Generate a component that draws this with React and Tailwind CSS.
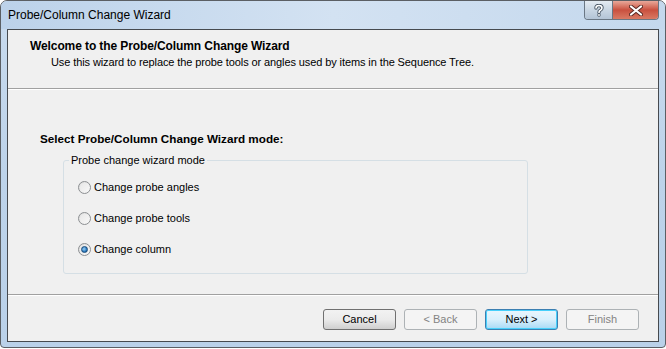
import React from 'react'

const font = { fontFamily: '"Liberation Sans", Arial, sans-serif' }

function Radio({ checked }) {
  return (
    <span className="relative inline-flex h-[13px] w-[13px] shrink-0 items-center justify-center rounded-full border border-[#8c8f92] bg-gradient-to-br from-[#dcdcdc] to-[#fbfbfb]">
      <span className="h-[9px] w-[9px] rounded-full bg-gradient-to-br from-[#e8e8e8] to-[#f7f7f7]" />
      {checked && (
        <span className="absolute h-[7px] w-[7px] rounded-full border border-[#1a4b7a] bg-[radial-gradient(circle_at_40%_40%,#9fd2f6,#2a7bc0_60%,#174a7c)]" />
      )}
    </span>
  )
}

function Btn({ children, disabled, primary }) {
  let cls = 'border-[#707070] bg-gradient-to-b from-[#f2f2f2] via-[#ebebeb] to-[#cfcfcf] text-black'
  if (disabled) cls = 'border-[#adb2b5] bg-[#f4f4f4] text-[#838383]'
  if (primary) cls = 'border-[#3c7fb1] bg-gradient-to-b from-[#eaf6fd] via-[#d9f0fc] to-[#a7d9f5] text-black shadow-[inset_0_0_0_1px_#48d0fb]'
  return (
    <div className={'flex h-[21px] w-[73px] items-center justify-center rounded-[3px] border text-[11px] ' + cls}>
      {children}
    </div>
  )
}

export default function App() {
  return (
    <div className="h-[349px] w-[666px] bg-white" style={font}>
      <div className="flex h-[348px] w-[666px] flex-col rounded-t-[7px] rounded-b-[4px] border border-[#5b5f64] bg-gradient-to-b from-[#c9dbee] via-[#bdd3ea] to-[#bad1e9]">
        {/* title bar */}
        <div className="flex h-[28px] items-start rounded-t-[6px] bg-gradient-to-r from-[#bcd2ea] via-[#d3e2f2] to-[#c4d8ed] pr-[6px]">
          <div className="flex h-[27px] flex-1 items-center pl-[7px] text-[12px] text-black">Probe/Column Change Wizard</div>
          <div className="flex h-[19px] overflow-hidden rounded-b-[4px] border border-t-0 border-[#6a7784]">
            <div className="flex w-[28px] items-center justify-center border-r border-[#6a7784] bg-gradient-to-b from-[#e4ebf2] via-[#c9d6e3] to-[#b3c4d6]">
              <svg width="10" height="13" viewBox="0 0 10 13">
                <path d="M2 4 Q2 1.5 5 1.5 Q8 1.5 8 4 Q8 5.5 6 6.5 Q5 7 5 8.5" fill="none" stroke="#4a5866" strokeWidth="3.4" strokeLinecap="round" />
                <path d="M2 4 Q2 1.5 5 1.5 Q8 1.5 8 4 Q8 5.5 6 6.5 Q5 7 5 8.5" fill="none" stroke="#fff" strokeWidth="1.6" strokeLinecap="round" />
                <circle cx="5" cy="11" r="1.7" fill="#4a5866" />
                <circle cx="5" cy="11" r="0.9" fill="#fff" />
              </svg>
            </div>
            <div className="flex w-[45px] items-center justify-center bg-gradient-to-b from-[#e8a89a] via-[#c9503f] to-[#d97a64]">
              <svg width="14" height="11" viewBox="0 0 14 11">
                <path d="M2 1.5 L12 9.5 M12 1.5 L2 9.5" stroke="#5a2a24" strokeWidth="4" strokeLinecap="round" />
                <path d="M2 1.5 L12 9.5 M12 1.5 L2 9.5" stroke="#fff" strokeWidth="2.2" strokeLinecap="round" />
              </svg>
            </div>
          </div>
        </div>

        {/* client area */}
        <div className="mx-[6px] flex h-[313px] flex-col border border-[#464a4f] bg-[#f0f0f0] text-[11px] text-black">
          <div className="h-[58px] pt-[9px]">
            <div className="pl-[22px] text-[12px] font-bold leading-[15px] tracking-[-0.1px]">Welcome to the Probe/Column Change Wizard</div>
            <div className="mt-[1px] pl-[43px] leading-[14px] tracking-[-0.1px]">Use this wizard to replace the probe tools or angles used by items in the Sequence Tree.</div>
          </div>
          <div className="h-[2px] border-t border-[#a0a0a0] bg-white" />

          <div className="flex-1 pl-[32px] pt-[42px]">
            <div className="text-[11.7px] font-bold leading-[14px]">Select Probe/Column Change Wizard mode:</div>
            <fieldset className="ml-[23px] mt-[7px] h-[121px] w-[465px] rounded-[3px] border border-[#d5dfe5]">
              <legend className="ml-[5px] px-[2px] leading-[14px]">Probe change wizard mode</legend>
              <div className="flex flex-col gap-[17px] pl-[14px] pt-[13px]">
                {[
                  ['Change probe angles', false],
                  ['Change probe tools', false],
                  ['Change column', true],
                ].map(([label, on]) => (
                  <div key={label} className="flex h-[14px] items-center gap-[3px]">
                    <Radio checked={on} />
                    <span>{label}</span>
                  </div>
                ))}
              </div>
            </fieldset>
          </div>

          <div className="h-[2px] border-t border-[#a0a0a0] bg-white" />
          <div className="flex h-[45px] justify-end gap-[8px] pr-[19px] pt-[13px]">
            <Btn>Cancel</Btn>
            <Btn disabled>&lt; Back</Btn>
            <Btn primary>Next &gt;</Btn>
            <Btn disabled>Finish</Btn>
          </div>
        </div>
      </div>
    </div>
  )
}
